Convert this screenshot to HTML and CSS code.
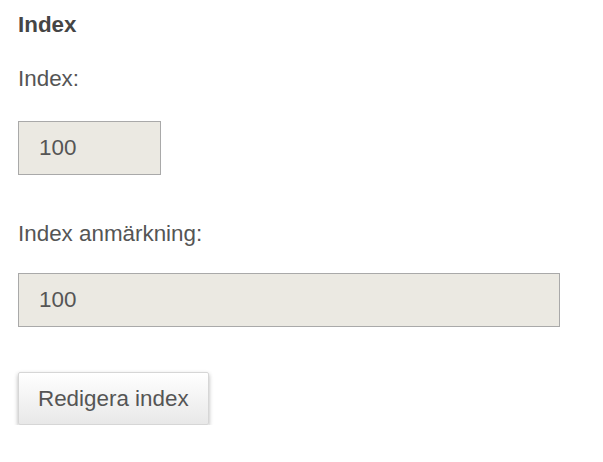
FILE: index.html
```html
<!DOCTYPE html>
<html lang="sv">
<head>
<meta charset="utf-8">
<title>Index</title>
<link rel="stylesheet" href="styles.css">
</head>
<body>
<form class="panel">
  <h2 class="title">Index</h2>
  <div class="field field-first">
    <label class="label" for="idx">Index:</label>
    <input class="input input-short" id="idx" type="text" value="100" readonly>
  </div>
  <div class="field field-second">
    <label class="label" for="idxnote">Index anmärkning:</label>
    <input class="input input-long" id="idxnote" type="text" value="100" readonly>
  </div>
  <button class="btn" type="button">Redigera index</button>
</form>
</body>
</html>
```
FILE: styles.css
```css
* { box-sizing: border-box; }
html, body { margin: 0; background: #fff; }
body {
  font-family: "Liberation Sans", Arial, sans-serif;
  font-size: 22.4px;
  color: #555;
}
.panel {
  padding: 10px 18px 0 18px;
  display: flex;
  flex-direction: column;
  align-items: flex-start;
}
.title {
  margin: 0;
  font-size: 22.4px;
  line-height: 30px;
  font-weight: bold;
  color: #454545;
}
.field {
  display: flex;
  flex-direction: column;
  align-items: flex-start;
  align-self: stretch;
}
.field-first { margin-top: 24px; }
.field-second { margin-top: 44px; }
.label {
  display: block;
  line-height: 30px;
}
.field-first .label { margin-bottom: 27px; }
.field-second .label { margin-bottom: 24px; }
.input {
  height: 54px;
  margin: 0;
  padding: 0 20px;
  border: 1px solid #a9a9a9;
  border-radius: 0;
  background: #ebe9e2;
  font-family: inherit;
  font-size: 22.4px;
  color: #555;
  outline: none;
}
.input-short { width: 143px; }
.input-long { width: 542px; }
.btn {
  margin-top: 45px;
  height: 53px;
  padding: 0 19px;
  border: 1px solid #d6d6d6;
  border-radius: 2px;
  background: linear-gradient(#ffffff, #e8e8e8);
  box-shadow: 0 2px 4px rgba(0,0,0,0.3);
  font-family: inherit;
  font-size: 22.4px;
  color: #555;
  cursor: pointer;
}
```
